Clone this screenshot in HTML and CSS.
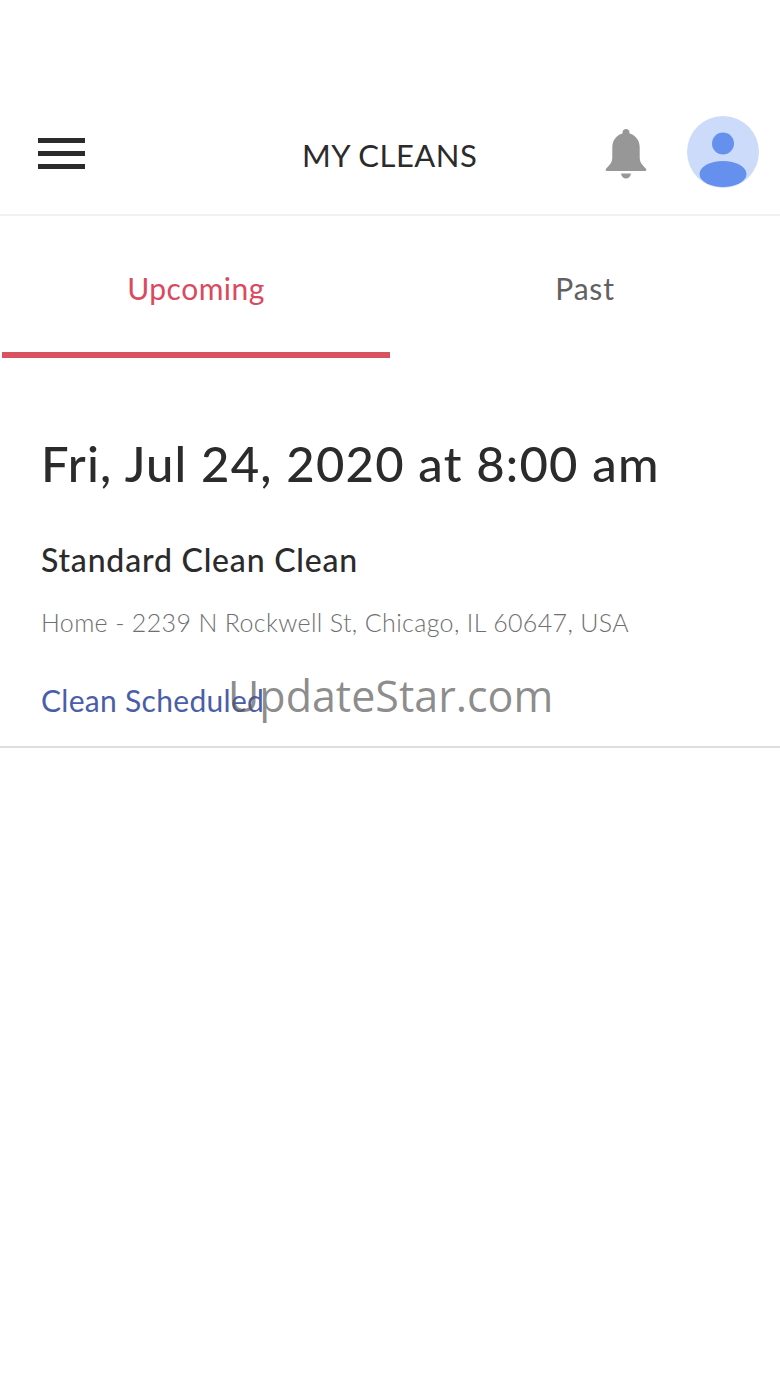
FILE: index.html
```html
<!DOCTYPE html>
<html lang="en">
<head>
    <meta charset="UTF-8">
    <meta name="viewport" content="width=device-width, initial-scale=1.0">
    <title>My Cleans</title>
    <link rel="stylesheet" href="styles.css">
</head>
<body>
    <header class="top-bar">
        <div class="menu-icon">
            <span></span>
            <span></span>
            <span></span>
        </div>
        <h1 class="top-title">MY CLEANS</h1>
        <svg class="bell-icon" viewBox="0 0 42 50" width="42" height="50">
            <path fill="#979797" d="M21 0c2 0 3.500 1.500 3.500 3.400v1.100C31 6.300 34.700 11.800 34.700 18.500v10c0 4.500 2 7 6.300 11.200.8.900.4 2.300-1 2.300H2c-1.400 0-1.800-1.400-1-2.300 4.300-4.200 6.300-6.700 6.300-11.200v-10C7.300 11.800 11 6.300 17.500 4.500V3.400C17.500 1.500 19 0 21 0z"/>
            <path fill="#979797" d="M16 44.500h10c-.4 3-2.500 5-5 5s-4.600-2-5-5z"/>
        </svg>
        <svg class="avatar" viewBox="0 0 72 72" width="72" height="72">
            <defs>
                <clipPath id="avatarClip"><circle cx="36" cy="36" r="36"/></clipPath>
            </defs>
            <circle cx="36" cy="36" r="36" fill="#ccdbf9"/>
            <g clip-path="url(#avatarClip)">
                <circle cx="36" cy="27.500" r="11" fill="#6690ee"/>
                <ellipse cx="36" cy="58" rx="23.500" ry="13" fill="#6690ee"/>
            </g>
        </svg>
    </header>
    <nav class="tabs">
        <div class="tab tab-active">Upcoming</div>
        <div class="tab">Past</div>
    </nav>
    <section class="clean">
        <h2 class="clean-date">Fri, Jul 24, 2020 at 8:00 am</h2>
        <h3 class="clean-type">Standard Clean Clean</h3>
        <p class="clean-address">Home - 2239 N Rockwell St, Chicago, IL 60647, USA</p>
        <p class="clean-status">Clean Scheduled</p>
    </section>
    <div class="watermark">UpdateStar.com</div>
</body>
</html>
```

FILE: styles.css
```css
html,body{
    margin: 0;
    padding: 0;
}
body{
    position: relative;
    width: 780px;
    height: 1387px;
    overflow: hidden;
    background: #fff;
    font-family: "Lato", "Noto Sans", sans-serif;
    color: #2b2b2b;
}
.top-bar{
    display: flex;
    align-items: center;
    height: 118px;
    margin-top: 98px;
    padding: 0 21px 0 38px;
    box-sizing: border-box;
    border-bottom: 2px solid #f1f1f1;
    position: relative;
}
.menu-icon{
    display: flex;
    flex-direction: column;
    gap: 8px;
    width: 47px;
    margin-bottom: 5px;
}
.menu-icon span{
    height: 5px;
    background: #2b2b2b;
}
.top-title{
    margin: 0 0 2px 217px;
    width: 175px;
    font-size: 31px;
    font-weight: 400;
    letter-spacing: .5px;
    white-space: nowrap;
}
.bell-icon{
    margin: 0 0 4px 128px;
}
.avatar{
    margin: 0 0 8px 40px;
}
.tabs{
    display: flex;
    padding-left: 2px;
    width: 778px;
}
.tab{
    flex: 1;
    height: 142px;
    box-sizing: border-box;
    padding-top: 54px;
    text-align: center;
    font-size: 30px;
    line-height: 36px;
    letter-spacing: .8px;
    color: #616161;
}
.tab-active{
    flex: 0 0 388px;
    color: #d94a60;
    letter-spacing: .5px;
    border-bottom: 6px solid #d9525f;
}
.clean{
    height: 390px;
    box-sizing: border-box;
    padding: 75px 0 0 41px;
    border-bottom: 2px solid #dedede;
}
.clean-date{
    margin: 0;
    font-size: 49px;
    line-height: 60px;
    font-weight: 500;
    letter-spacing: 1.200px;
    color: #2b2b2b;
}
.clean-type{
    margin: 48px 0 0;
    font-size: 32px;
    line-height: 38px;
    font-weight: 500;
    letter-spacing: .8px;
    color: #2b2b2b;
}
.clean-address{
    margin: 26px 0 0;
    font-size: 25px;
    line-height: 34px;
    font-weight: 300;
    letter-spacing: .35px;
    color: #6f6f6f;
}
.clean-status{
    margin: 43px 0 0;
    font-size: 30px;
    line-height: 36px;
    letter-spacing: .3px;
    color: #4a5ea8;
}
.watermark{
    position: absolute;
    left: 228px;
    top: 666px;
    font-family: "Open Sans", sans-serif;
    font-size: 43px;
    line-height: 60px;
    color: rgba(90, 90, 90, .7);
    white-space: nowrap;
}
```
